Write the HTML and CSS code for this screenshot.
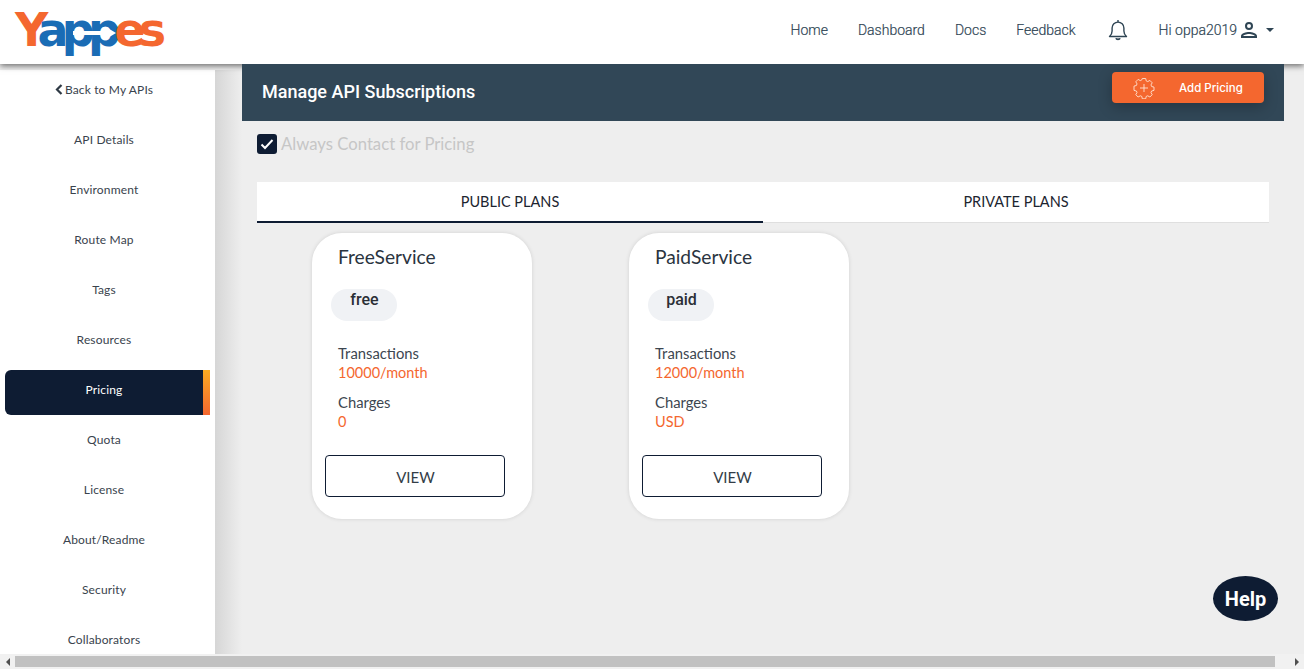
FILE: index.html
```html
<!DOCTYPE html>
<html lang="en">
<head>
  <meta charset="UTF-8">
  <meta name="viewport" content="width=device-width, initial-scale=1.0">
  <title>Yappes - Manage API Subscriptions</title>
  <link rel="stylesheet" href="styles.css">
</head>
<body>
  <header class="topbar">
    <a class="logo" href="#">
      <span class="logo-or">Y</span><span class="logo-bl">app</span><span class="logo-or">es</span>
      <svg class="logo-arrow" width="44" height="14" viewBox="0 0 44 14"><path d="M0 5h33V1l10 6-10 6V9H0z" fill="#fff"/></svg>
    </a>
    <nav class="topnav">
      <a href="#">Home</a>
      <a href="#">Dashboard</a>
      <a href="#">Docs</a>
      <a href="#">Feedback</a>
    </nav>
    <svg class="bell" width="22" height="22" viewBox="0 0 22 22" fill="none" stroke="#2f4554" stroke-width="1.4">
      <path d="M2.5 17.5c1.8-1.5 2.6-3 2.6-5.500V9a5.900 5.900 0 0 1 11.800 0v3c0 2.500.8 4 2.600 5.500z" stroke-linejoin="round"/>
      <path d="M11 1v2" />
      <path d="M9 19.300c.5 1.300 3.500 1.300 4 0" stroke-width="1.800"/>
    </svg>
    <div class="user">
      <span>Hi oppa2019</span>
      <svg width="24" height="24" viewBox="0 0 24 24" fill="#2f4554"><path d="M12 6a2 2 0 1 1 0 4 2 2 0 0 1 0-4m0 10c2.700 0 5.800 1.300 6 2H6c.2-.7 3.300-2 6-2M12 4a4 4 0 1 0 0 8 4 4 0 0 0 0-8zm0 10c-2.700 0-8 1.300-8 4v2h16v-2c0-2.700-5.300-4-8-4z"/></svg>
      <span class="caret"></span>
    </div>
  </header>

  <div class="layout">
    <aside class="sidebar">
      <a class="side-item" href="#"><svg width="8" height="11" viewBox="0 0 8 11"><path d="M6.500 1 2 5.500 6.500 10" fill="none" stroke="#2f3a45" stroke-width="2.200"/></svg>Back to My APIs</a>
      <a class="side-item" href="#">API Details</a>
      <a class="side-item" href="#">Environment</a>
      <a class="side-item" href="#">Route Map</a>
      <a class="side-item" href="#">Tags</a>
      <a class="side-item" href="#">Resources</a>
      <a class="side-item active" href="#">Pricing</a>
      <a class="side-item" href="#">Quota</a>
      <a class="side-item" href="#">License</a>
      <a class="side-item" href="#">About/Readme</a>
      <a class="side-item" href="#">Security</a>
      <a class="side-item" href="#">Collaborators</a>
    </aside>
    <div class="side-shade"></div>

    <main class="content">
      <div class="banner">
        <h1>Manage API Subscriptions</h1>
        <button class="add-btn">
          <svg width="22" height="22" viewBox="0 0 22 22" fill="none" stroke="#ffe3d2" stroke-width="0.9">
            <path d="M9.300 1.500h3.400l.5 2.400 1.500.7 2.200-1.200 2.300 2.400-1.200 2.100.6 1.600 2.400.6v3.300l-2.400.6-.6 1.500 1.200 2.200-2.300 2.300-2.200-1.200-1.500.6-.5 2.400H9.300l-.5-2.400-1.500-.6-2.200 1.200-2.300-2.300 1.200-2.200-.6-1.500-2.400-.6V9.100l2.400-.6.6-1.600-1.200-2.100 2.300-2.400 2.200 1.200 1.500-.7z" stroke-linejoin="round"/>
            <path d="M7 11h8M11 7v8"/>
          </svg>
          <span>Add Pricing</span>
        </button>
      </div>

      <div class="panel">
        <label class="contact">
          <span class="checkbox"><svg width="14" height="12" viewBox="0 0 14 12"><path d="M1.500 6.500 5 10l7.500-8" fill="none" stroke="#fff" stroke-width="2"/></svg></span>
          Always Contact for Pricing
        </label>

        <div class="tabs">
          <div class="tab active">PUBLIC PLANS</div>
          <div class="tab">PRIVATE PLANS</div>
        </div>

        <div class="cards">
          <div class="card">
            <div class="card-name">FreeService</div>
            <div class="badge">free</div>
            <div class="field">Transactions</div>
            <div class="value">10000/month</div>
            <div class="field">Charges</div>
            <div class="value">0</div>
            <button class="view-btn">VIEW</button>
          </div>
          <div class="card">
            <div class="card-name">PaidService</div>
            <div class="badge">paid</div>
            <div class="field">Transactions</div>
            <div class="value">12000/month</div>
            <div class="field">Charges</div>
            <div class="value">USD</div>
            <button class="view-btn">VIEW</button>
          </div>
        </div>
      </div>
    </main>
  </div>

  <button class="help">Help</button>

  <div class="hscroll">
    <span class="arrow-left"></span>
    <div class="thumb"></div>
    <span class="arrow-right"></span>
  </div>
</body>
</html>
```

FILE: styles.css
```css
:root {
  --navy: #0e1c33;
  --slate: #314757;
  --orange: #f4672f;
  --page-bg: #eeeeee;
}
* { box-sizing: border-box; }
html, body { height: 100%; }
body {
  margin: 0;
  height: 669px;
  overflow: hidden;
  display: flex;
  flex-direction: column;
  font-family: "Lato", sans-serif;
  background: var(--page-bg);
  color: #333d47;
}
a { text-decoration: none; color: inherit; }

/* Top bar */
.topbar {
  position: relative;
  z-index: 2;
  flex: none;
  height: 64px;
  display: flex;
  align-items: center;
  padding: 0 30px 4px 15px;
  background: #fff;
  box-shadow: 0 2px 6px rgba(0,0,0,0.55);
}
.logo {
  position: relative;
  display: block;
  font-family: "DejaVu Sans", sans-serif;
  font-weight: 700;
  font-size: 46px;
  line-height: 44px;
  letter-spacing: -6.7px;
}
.logo-or { color: #f4672f; }
.logo-bl { color: #1a6cb5; }
.logo-arrow {
  position: absolute;
  left: 58px;
  top: 18px;
}
.topnav {
  margin-left: auto;
  display: flex;
  gap: 30px;
  font-family: "Roboto", sans-serif;
  font-weight: 300;
  font-size: 14px;
  color: #2f4554;
  -webkit-text-stroke: 0.2px #2f4554;
}
.bell { margin-left: 31px; }
.user {
  margin-left: 30px;
  display: flex;
  align-items: center;
  font-family: "Roboto", sans-serif;
  font-weight: 300;
  font-size: 14px;
  color: #2f4554;
  -webkit-text-stroke: 0.2px #2f4554;
}
.caret {
  margin-left: 5px;
  border-top: 4px solid #2f4554;
  border-left: 4px solid transparent;
  border-right: 4px solid transparent;
}

/* Sidebar */
.layout {
  flex: 1;
  min-height: 0;
  display: flex;
}
.sidebar {
  flex: none;
  width: 215px;
  margin-top: 6px;
  padding-left: 5px;
  overflow: hidden;
  background: #fff;
}
.side-item {
  display: flex;
  align-items: center;
  justify-content: center;
  gap: 2px;
  flex: none;
  width: 205px;
  height: 45px;
  margin-bottom: 5px;
  padding: 0 7px 7px 0;
  font-size: 12px;
  letter-spacing: 0.15px;
  color: #39434d;
}
.side-item.active {
  color: #fff;
  background: var(--navy);
  border-radius: 6px 0 0 6px;
  position: relative;
}
.side-item.active::after {
  content: "";
  position: absolute;
  top: 0;
  right: 0;
  bottom: 0;
  width: 7px;
  background: linear-gradient(#fbaa22, #f4672f);
}
.side-shade {
  flex: none;
  width: 27px;
  margin-top: 6px;
  background: linear-gradient(90deg, #d6d6d6, #eeeeee);
}

/* Main */
.content {
  flex: none;
  width: 1042px;
}
.banner {
  position: relative;
  z-index: 3;
  height: 57px;
  display: flex;
  align-items: flex-start;
  justify-content: space-between;
  padding: 8px 20px 0;
  background: var(--slate);
}
.banner h1 {
  margin: 7px 0 0;
  font-family: "Roboto", sans-serif;
  font-weight: 500;
  font-size: 18px;
  line-height: 25px;
  color: #fff;
}
.add-btn {
  width: 152px;
  height: 31px;
  display: flex;
  align-items: center;
  padding: 0 0 0 21px;
  border: none;
  border-radius: 4px;
  background: var(--orange);
  color: #fff;
  font-family: "Inter", sans-serif;
  font-weight: 500;
  font-size: 11.5px;
  box-shadow: 0 4px 14px rgba(0,0,0,0.25);
}
.add-btn span { margin-left: 24px; }
.panel { padding: 13px 15px 0; }
.contact {
  display: flex;
  align-items: center;
  gap: 4px;
  height: 20px;
  padding-bottom: 1px;
  font-size: 16.7px;
  color: #c6c6c6;
}
.checkbox {
  width: 20px;
  height: 20px;
  display: flex;
  align-items: center;
  justify-content: center;
  margin-bottom: -1px;
  border-radius: 3px;
  background: var(--navy);
}
.tabs {
  margin-top: 28px;
  display: flex;
  background: #fff;
}
.tab {
  flex: 1;
  height: 41px;
  padding-bottom: 2px;
  display: flex;
  align-items: center;
  justify-content: center;
  font-size: 14.5px;
  color: #1c2530;
  border-bottom: 1px solid #dfdfdf;
}
.tab.active {
  padding-bottom: 1px;
  border-bottom: 2px solid var(--navy);
}
.cards {
  margin-top: 10px;
  padding-left: 55px;
  display: flex;
  gap: 97px;
}
.card {
  width: 220px;
  height: 286px;
  padding: 12px 26px 0 26px;
  background: #fff;
  border-radius: 30px;
  box-shadow: 0 0 4px rgba(0,0,0,0.12);
}
.card-name {
  font-size: 19.2px;
  line-height: 24px;
  color: #2a3440;
}
.badge {
  width: 66px;
  height: 32px;
  margin: 20px 0 23px -7px;
  padding-left: 1px;
  border-radius: 16px;
  background: #f0f2f5;
  text-align: center;
  font-family: "Roboto", sans-serif;
  font-weight: 500;
  font-size: 16px;
  line-height: 22px;
  color: #2b2f36;
}
.field {
  font-size: 14.8px;
  line-height: 19px;
  color: #3c4650;
}
.value {
  font-size: 14.5px;
  line-height: 19px;
  margin-bottom: 11px;
  color: var(--orange);
}
.view-btn {
  display: block;
  width: 180px;
  height: 42px;
  margin: 24px 0 0 -13px;
  padding: 2px 0 0 1px;
  background: #fff;
  border: 1px solid var(--navy);
  border-radius: 4px;
  font-family: "Lato", sans-serif;
  font-size: 15px;
  color: #333d47;
}

/* Help bubble */
.help {
  position: absolute;
  left: 1213px;
  top: 576px;
  z-index: 5;
  width: 65px;
  height: 45px;
  padding: 0;
  border: none;
  border-radius: 50%;
  background: var(--navy);
  color: #fff;
  font-family: "Roboto", sans-serif;
  font-weight: 700;
  font-size: 20px;
}

/* Bottom scrollbar */
.hscroll {
  position: relative;
  z-index: 4;
  flex: none;
  height: 15px;
  display: flex;
  align-items: center;
  background: #f1f1f1;
}
.thumb {
  width: 1260px;
  height: 11px;
  background: #c1c1c1;
}
.arrow-left, .arrow-right {
  flex: none;
  width: 15px;
  display: flex;
  justify-content: center;
}
.arrow-left::before {
  content: "";
  border-right: 4px solid #505050;
  border-top: 4px solid transparent;
  border-bottom: 4px solid transparent;
}
.arrow-right { margin-left: 14px; }
.arrow-right::before {
  content: "";
  border-left: 4px solid #505050;
  border-top: 4px solid transparent;
  border-bottom: 4px solid transparent;
}
```
